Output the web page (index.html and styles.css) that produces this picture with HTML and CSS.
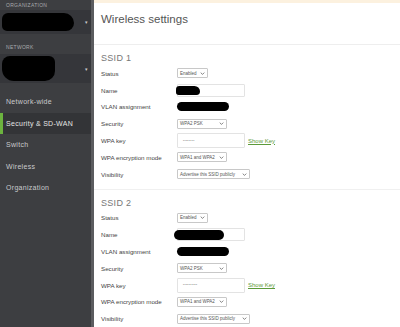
FILE: index.html
```html
<!DOCTYPE html>
<html lang="en">
<head>
    <meta charset="UTF-8">
    <meta name="viewport" content="width=device-width, initial-scale=1.0">
    <title>Wireless settings</title>
    <link rel="stylesheet" href="styles.css">
</head>
<body>
    <div class="app">
        <nav class="sidebar">
            <div class="side-label">Organization</div>
            <div class="picker picker-org">
                <span class="redact redact-org"></span>
                <span class="caret">&#9662;</span>
            </div>
            <div class="side-label">Network</div>
            <div class="picker picker-net">
                <span class="redact redact-net"></span>
                <span class="caret">&#9662;</span>
            </div>
            <ul class="menu">
                <li>Network-wide</li>
                <li class="active">Security &amp; SD-WAN</li>
                <li>Switch</li>
                <li>Wireless</li>
                <li>Organization</li>
            </ul>
        </nav>

        <main class="main">
            <div class="notice"></div>
            <h1 class="page-title">Wireless settings</h1>

            <section class="ssid">
                <h2>SSID 1</h2>
                <div class="form">
                    <span class="label">Status</span>
                    <div class="field"><span class="select sel-status">Enabled <svg viewBox="0 0 8 5"><path d="M1 1l3 3 3-3"/></svg></span></div>

                    <span class="label">Name</span>
                    <div class="field"><span class="input input-name"><span class="redact redact-name"></span></span></div>

                    <span class="label">VLAN assignment</span>
                    <div class="field"><span class="redact redact-vlan"></span></div>

                    <span class="label">Security</span>
                    <div class="field"><span class="select sel-sec">WPA2 PSK <svg viewBox="0 0 8 5"><path d="M1 1l3 3 3-3"/></svg></span></div>

                    <span class="label">WPA key</span>
                    <div class="field"><span class="input input-key">&bull;&bull;&bull;&bull;&bull;&bull;&bull;&bull;</span><a class="show-key" href="#">Show Key</a></div>

                    <span class="label">WPA encryption mode</span>
                    <div class="field"><span class="select sel-sec">WPA1 and WPA2 <svg viewBox="0 0 8 5"><path d="M1 1l3 3 3-3"/></svg></span></div>

                    <span class="label">Visibility</span>
                    <div class="field"><span class="select sel-vis">Advertise this SSID publicly <svg viewBox="0 0 8 5"><path d="M1 1l3 3 3-3"/></svg></span></div>
                </div>
            </section>

            <section class="ssid">
                <h2>SSID 2</h2>
                <div class="form">
                    <span class="label">Status</span>
                    <div class="field"><span class="select sel-status">Enabled <svg viewBox="0 0 8 5"><path d="M1 1l3 3 3-3"/></svg></span></div>

                    <span class="label">Name</span>
                    <div class="field"><span class="input input-name"><span class="redact redact-name2"></span></span></div>

                    <span class="label">VLAN assignment</span>
                    <div class="field"><span class="redact redact-vlan"></span></div>

                    <span class="label">Security</span>
                    <div class="field"><span class="select sel-sec">WPA2 PSK <svg viewBox="0 0 8 5"><path d="M1 1l3 3 3-3"/></svg></span></div>

                    <span class="label">WPA key</span>
                    <div class="field"><span class="input input-key">&bull;&bull;&bull;&bull;&bull;&bull;&bull;&bull;&bull;&bull;</span><a class="show-key" href="#">Show Key</a></div>

                    <span class="label">WPA encryption mode</span>
                    <div class="field"><span class="select sel-sec">WPA1 and WPA2 <svg viewBox="0 0 8 5"><path d="M1 1l3 3 3-3"/></svg></span></div>

                    <span class="label">Visibility</span>
                    <div class="field"><span class="select sel-vis">Advertise this SSID publicly <svg viewBox="0 0 8 5"><path d="M1 1l3 3 3-3"/></svg></span></div>
                </div>
            </section>
        </main>
    </div>
</body>
</html>
```

FILE: styles.css
```css
body {
    font-family: "Liberation Sans", Arial, sans-serif;
    margin: 0;
    padding: 0;
    background-color: #fff;
    color: #444;
}
.app {
    display: flex;
    height: 327px;
    overflow: hidden;
}
.sidebar {
    width: 91px;
    flex-shrink: 0;
    background-color: #3d3e41;
    border-right: 3px solid #5b5c5f;
    color: #ddd;
}
.side-label {
    font-size: 5px;
    text-transform: uppercase;
    letter-spacing: 0.3px;
    color: #a9aaad;
    padding: 2px 6px 0;
    height: 8px;
}
.picker {
    display: flex;
    align-items: center;
    justify-content: space-between;
    background-color: #35363a;
    padding: 0 3px 0 2px;
}
.picker-org {
    height: 24px;
    margin-bottom: 8px;
}
.picker-net {
    height: 29px;
    margin-top: 2px;
}
.caret {
    font-size: 5px;
    color: #ccc;
}
.redact {
    display: inline-block;
    background: #000;
}
.redact-org {
    width: 72px;
    height: 18px;
    border-radius: 6px 10px 8px 5px;
}
.redact-net {
    width: 53px;
    height: 25px;
    border-radius: 8px 6px 10px 12px;
}
.menu {
    list-style: none;
    margin: 8px 0 0;
    padding: 0;
}
.menu li {
    font-size: 7px;
    letter-spacing: 0.3px;
    color: #c9cacc;
    height: 21.5px;
    line-height: 21.5px;
    padding-left: 6px;
}
.menu li.active {
    background-color: #333437;
    border-left: 3px solid #6cb33f;
    padding-left: 3px;
    color: #e4e4e4;
}
.main {
    flex: 1;
}
.notice {
    height: 3px;
    background-color: #fcf1df;
}
.page-title {
    font-size: 11.5px;
    font-weight: normal;
    color: #555;
    margin: 0;
    padding: 10px 7px 0;
    height: 31px;
    border-bottom: 1px solid #eee;
}
.ssid {
    padding: 8px 0 0 7px;
    border-bottom: 1px solid #f0f0f0;
}
.ssid h2 {
    font-size: 9px;
    font-weight: normal;
    color: #777;
    letter-spacing: 0.3px;
    margin: 0 0 2px;
}
.form {
    display: grid;
    grid-template-columns: 76px 1fr;
    grid-auto-rows: 16.8px;
    align-items: center;
    padding-bottom: 6px;
}
.label {
    font-size: 6.2px;
    color: #444;
}
.field {
    display: flex;
    align-items: center;
}
.select {
    display: inline-flex;
    align-items: center;
    gap: 3px;
    height: 8px;
    padding: 0 2px;
    border: 1px solid #c8c8c8;
    border-radius: 1px;
    font-size: 4.5px;
    color: #555;
    background: #fff;
}
.select svg {
    width: 5px;
    height: 3px;
    margin-left: auto;
    fill: none;
    stroke: #555;
    stroke-width: 1.2;
}
.sel-status {
    width: 25px;
}
.sel-sec {
    width: 44px;
}
.sel-vis {
    width: 67px;
}
.input {
    display: inline-flex;
    align-items: center;
    border: 1px solid #e3e3e3;
    border-radius: 1px;
    width: 66px;
    height: 11px;
    font-size: 3px;
    color: #777;
    padding-left: 0;
}
.input-key {
    height: 13px;
    padding-left: 5px;
    width: 61px;
    letter-spacing: 0.4px;
}
.redact-name {
    width: 24px;
    height: 9px;
    border-radius: 5px 8px 5px 4px;
    margin-left: -2px;
}
.redact-name2 {
    width: 50px;
    height: 10px;
    border-radius: 5px;
    margin-left: -4px;
}
.redact-vlan {
    width: 52px;
    height: 9px;
    border-radius: 5px;
}
.show-key {
    font-size: 6px;
    color: #5c9a3a;
    margin-left: 3px;
}
```
